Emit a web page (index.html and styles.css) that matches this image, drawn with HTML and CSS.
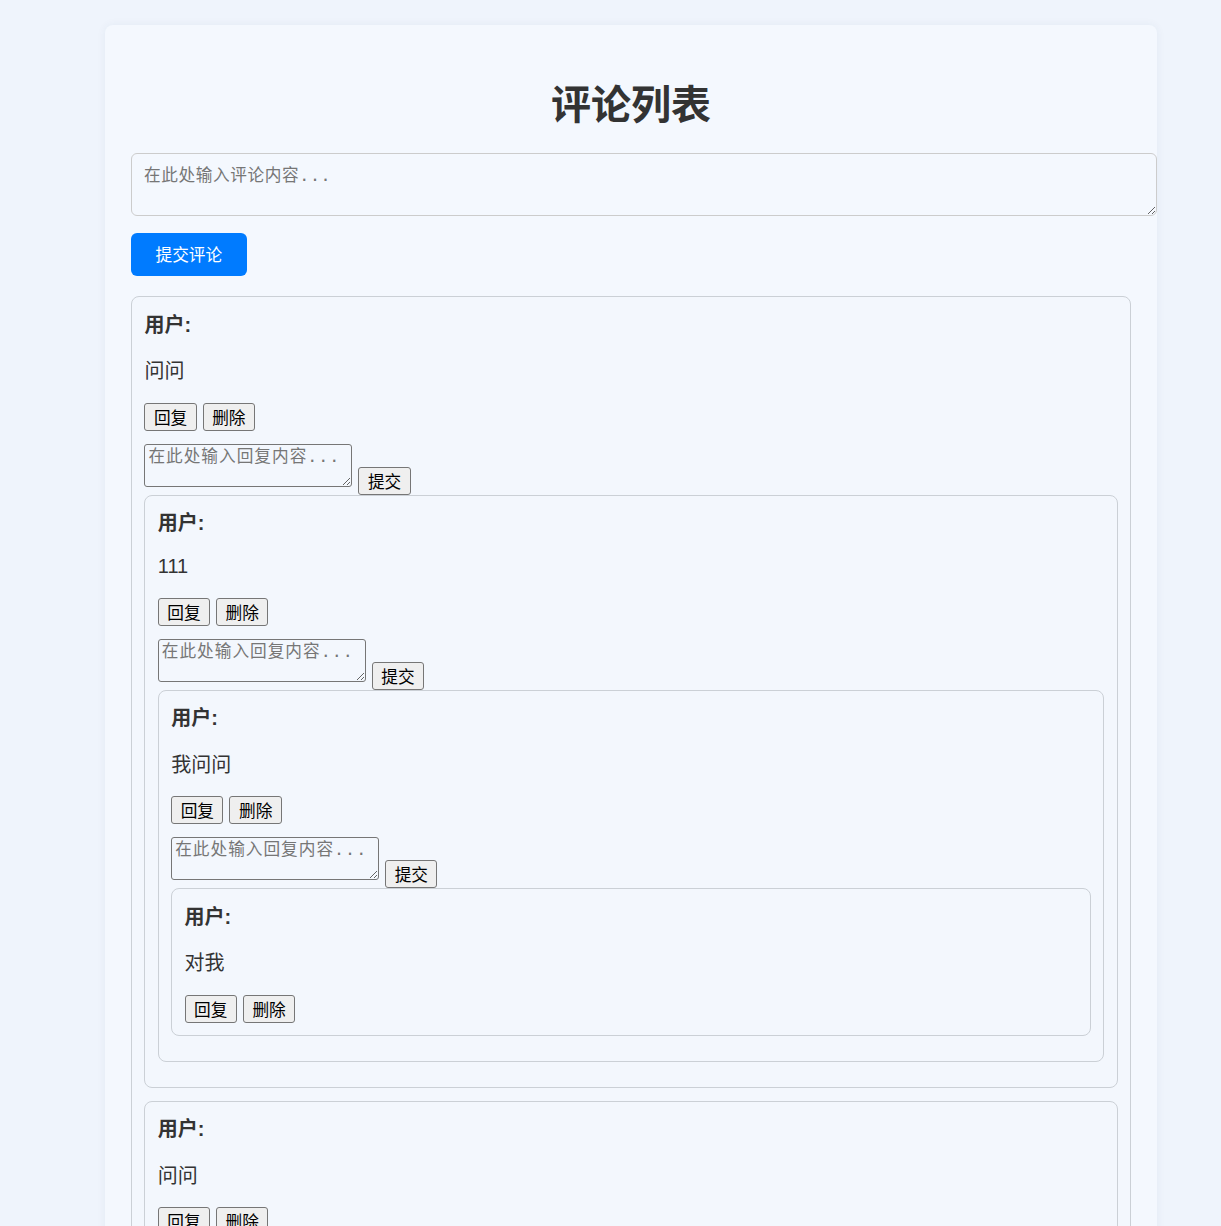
FILE: index.html
```html
<!DOCTYPE html>
<html lang="zh-CN">
<head>
<meta charset="utf-8">
<title>评论列表</title>
<link rel="stylesheet" href="styles.css">
</head>
<body>
<div class="container">
  <h1 class="title">评论列表</h1>
  <textarea class="main-input" placeholder="在此处输入评论内容..."></textarea>
  <button class="submit-main">提交评论</button>

  <div class="comment-list">
    <div class="comment">
      <div class="comment-user">用户:</div>
      <p class="comment-text">问问</p>
      <div class="actions"><button class="btn">回复</button><button class="btn">删除</button></div>
      <div class="reply-row"><textarea class="reply-input" placeholder="在此处输入回复内容..."></textarea><button class="btn reply-submit">提交</button></div>
      <div class="replies">
        <div class="comment">
          <div class="comment-user">用户:</div>
          <p class="comment-text is-latin">111</p>
          <div class="actions"><button class="btn">回复</button><button class="btn">删除</button></div>
          <div class="reply-row"><textarea class="reply-input" placeholder="在此处输入回复内容..."></textarea><button class="btn reply-submit">提交</button></div>
          <div class="replies">
            <div class="comment">
              <div class="comment-user">用户:</div>
              <p class="comment-text">我问问</p>
              <div class="actions"><button class="btn">回复</button><button class="btn">删除</button></div>
              <div class="reply-row"><textarea class="reply-input" placeholder="在此处输入回复内容..."></textarea><button class="btn reply-submit">提交</button></div>
              <div class="replies">
                <div class="comment">
                  <div class="comment-user">用户:</div>
                  <p class="comment-text">对我</p>
                  <div class="actions"><button class="btn">回复</button><button class="btn">删除</button></div>
                </div>
              </div>
            </div>
          </div>
        </div>
        <div class="comment">
          <div class="comment-user">用户:</div>
          <p class="comment-text">问问</p>
          <div class="actions"><button class="btn">回复</button><button class="btn">删除</button></div>
        </div>
      </div>
    </div>
  </div>
</div>
</body>
</html>
```
FILE: styles.css
```css
html {
  scrollbar-width: none;
}

body {
  margin: 0;
  background: #eff4fc;
  font-family: "Liberation Sans", "Noto Sans CJK SC", sans-serif;
  color: #333;
}

.container {
  width: 1000px;
  margin: 25px 0 0 105px;
  padding: 25px 26px 40px;
  background: #f4f8fe;
  border-radius: 8px;
  box-shadow: 0 0 10px rgba(40, 60, 100, 0.06);
}

.title {
  margin: 26px 0 24px;
  font-family: "Noto Sans CJK SC", sans-serif;
  font-size: 40px;
  line-height: 53px;
  font-weight: 700;
  text-align: center;
  color: #333;
}

.main-input {
  display: block;
  width: 100%;
  height: 37px;
  margin: 0 0 17px;
  padding: 12px 12px 12px;
  border: 1px solid #cccccc;
  border-radius: 6px;
  background: #f4f8fe;
  font-family: "DejaVu Sans Mono", "Noto Sans CJK SC", monospace;
  font-size: 16.67px;
  line-height: 20px;
  letter-spacing: 0.6px;
  color: #333;
  resize: vertical;
}

.main-input::placeholder,
.reply-input::placeholder {
  color: #767676;
}

.submit-main {
  display: block;
  padding: 12px 24.5px;
  border: none;
  border-radius: 6px;
  background: #007bff;
  color: #fff;
  font-family: "Noto Sans CJK SC", sans-serif;
  font-size: 16.67px;
  line-height: 19px;
}

.comment-list {
  margin-top: 20px;
}

.comment {
  margin-bottom: 12.5px;
  padding: 12.5px 12.4px;
  border: 1px solid #cbd0d6;
  border-radius: 8px;
  background: #f3f7fd;
}

.comment-user {
  margin-top: 2px;
  font-size: 20px;
  line-height: 26.5px;
  font-weight: 700;
}

.comment-text {
  margin: 20px 0 18px;
  font-size: 20px;
  line-height: 26.5px;
}

.comment-text.is-latin {
  margin: 17px 0 20px;
  line-height: 24px;
}

.actions {
  display: flex;
  gap: 6px;
}

.btn {
  height: 28px;
  padding: 0 8.5px;
  border: 1px solid #767676;
  border-radius: 3px;
  background: #efefef;
  color: #000;
  font-family: "Noto Sans CJK SC", sans-serif;
  font-size: 16.67px;
  line-height: 24px;
}

.reply-row {
  display: flex;
  align-items: flex-start;
  gap: 6px;
  margin-top: 13px;
  height: 51px;
}

.reply-input {
  box-sizing: border-box;
  width: 208px;
  height: 43px;
  margin: 0;
  padding: 2px 3px;
  border: 1px solid #767676;
  border-radius: 3px;
  background: transparent;
  font-family: "DejaVu Sans Mono", "Noto Sans CJK SC", monospace;
  font-size: 16.67px;
  line-height: 20px;
  letter-spacing: 1px;
  color: #333;
}

.reply-submit {
  margin-top: 23px;
}
```
